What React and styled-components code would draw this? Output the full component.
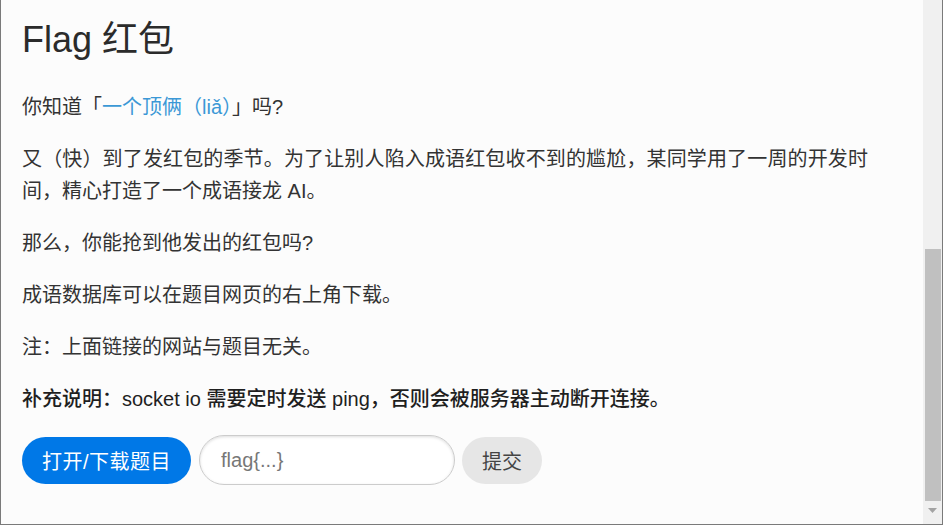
import React from "react";
import styled, { createGlobalStyle } from "styled-components";

const GlobalStyle = createGlobalStyle`
  html, body {
    margin: 0;
    padding: 0;
    background: #ffffff;
  }
  body {
    font-family: "Liberation Sans", "Noto Sans CJK SC", sans-serif;
  }
`;

const Frame = styled.div`
  display: flex;
  width: 943px;
  height: 525px;
  box-sizing: border-box;
  border-left: 1px solid #7a7a7a;
  border-right: 1px solid #7a7a7a;
  border-bottom: 1px solid #7a7a7a;
  overflow: hidden;
`;

const Content = styled.main`
  flex: 1;
  min-width: 0;
  box-sizing: border-box;
  padding: 18px 55px 0 21px;
  background: #fcfcfc;
  color: #333333;
  font-family: "Liberation Sans", "Noto Sans CJK SC", sans-serif;
  font-size: 20px;
  line-height: 32px;
`;

const Title = styled.h1`
  margin: 0 0 29px;
  font-size: 36px;
  font-weight: normal;
  line-height: 44px;
  color: #2b2b2b;
`;

const Para = styled.p`
  margin: 0 0 20px;
  text-align: justify;
  font-weight: ${(p) => (p.$strong ? 500 : "normal")};
  color: ${(p) => (p.$strong ? "#1f1f1f" : "#333333")};
`;

const Link = styled.a`
  color: #3b98d6;
  text-decoration: none;
`;

const Form = styled.form`
  display: flex;
  align-items: center;
  margin-top: 16px;
`;

const PillButton = styled.button`
  height: 47px;
  box-sizing: border-box;
  padding: 0 20px;
  border: none;
  border-radius: 24px;
  background: ${(p) => (p.$primary ? "#0078e7" : "#e6e6e6")};
  color: ${(p) => (p.$primary ? "#ffffff" : "#444444")};
  font-family: inherit;
  font-size: 20px;
  letter-spacing: ${(p) => (p.$primary ? "0.5px" : "0")};
  cursor: pointer;
`;

const FlagInput = styled.input`
  width: 256px;
  height: 50px;
  box-sizing: border-box;
  margin: 0 7px 0 8px;
  padding: 0 21px;
  border: 1px solid #cccccc;
  border-radius: 25px;
  box-shadow: inset 0 1px 3px #dddddd;
  background: #ffffff;
  font-family: inherit;
  font-size: 20px;
  color: #333333;
  outline: none;

  &::placeholder {
    color: #777777;
  }
`;

const Scrollbar = styled.div`
  display: flex;
  flex-direction: column;
  width: 19px;
  flex-shrink: 0;
  background: #f0f0f0;
  padding-top: 249px;
  box-sizing: border-box;
`;

const Thumb = styled.div`
  height: 252px;
  margin: 0 1px 0 2px;
  background: #c0c0c0;
`;

const Arrow = styled.div`
  display: flex;
  justify-content: center;
  padding-top: 7px;
`;

export default function App() {
  return (
    <>
      <GlobalStyle />
      <Frame>
        <Content>
          <Title>Flag 红包</Title>
          <Para>
            你知道「<Link href="#">一个顶俩（liǎ）</Link>」吗?
          </Para>
          <Para>
            又（快）到了发红包的季节。为了让别人陷入成语红包收不到的尴尬，某同学用了一周的开发时间，精心打造了一个成语接龙 AI。
          </Para>
          <Para>那么，你能抢到他发出的红包吗?</Para>
          <Para>成语数据库可以在题目网页的右上角下载。</Para>
          <Para>注：上面链接的网站与题目无关。</Para>
          <Para $strong>
            补充说明：socket io 需要定时发送 ping，否则会被服务器主动断开连接。
          </Para>
          <Form onSubmit={(e) => e.preventDefault()}>
            <PillButton type="button" $primary>
              打开/下载题目
            </PillButton>
            <FlagInput type="text" placeholder="flag{...}" />
            <PillButton type="submit">提交</PillButton>
          </Form>
        </Content>
        <Scrollbar>
          <Thumb />
          <Arrow>
            <svg width="9" height="5" viewBox="0 0 9 5">
              <path d="M0 0 L9 0 L4.5 5 Z" fill="#a3a3a3" />
            </svg>
          </Arrow>
        </Scrollbar>
      </Frame>
    </>
  );
}
